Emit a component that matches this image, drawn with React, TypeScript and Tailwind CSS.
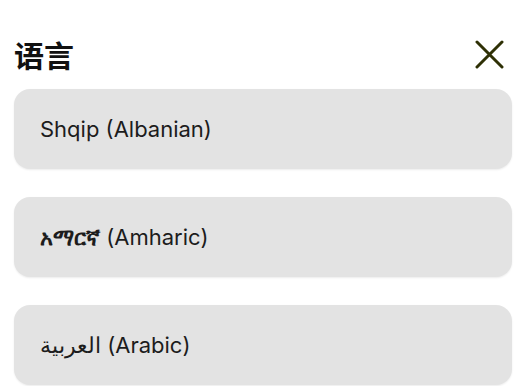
const languages = [
  { id: 'sq', native: 'Shqip', english: 'Albanian', bold: false },
  { id: 'am', native: 'አማርኛ', english: 'Amharic', bold: true },
  { id: 'ar', native: 'العربية', english: 'Arabic', bold: false },
];

export default function App() {
  return (
    <div className="w-[518px] h-[386px] overflow-hidden bg-white pl-[14px] pr-[6px] pt-[35px] font-['Inter','Noto_Sans','Noto_Sans_CJK_SC',sans-serif] text-[#1c1c1c]">
      <div className="flex items-center justify-between h-[38px] mb-[16px]">
        <h2 className="text-[30px] leading-none font-bold font-['Noto_Sans_CJK_SC',sans-serif] text-[#111]">语言</h2>
        <button className="mr-[8px] w-[29px] h-[29px] flex items-center justify-center">
          <svg width="29" height="29" viewBox="0 0 29 29" fill="none" stroke="#2e3005" strokeWidth="3" strokeLinecap="round">
            <path d="M2 2 L27 27 M27 2 L2 27" />
          </svg>
        </button>
      </div>
      <div className="flex flex-col gap-[28px]">
        {languages.map(lang => (
          <div
            key={lang.id}
            className="h-[80px] rounded-[16px] bg-[#e3e3e3] shadow-[0_1px_2px_rgba(0,0,0,0.08)] flex items-center px-[26px]"
          >
            <span className="text-[22px] leading-none">
              <span className={lang.bold ? 'font-bold' : ''}>{lang.native}</span> ({lang.english})
            </span>
          </div>
        ))}
      </div>
    </div>
  );
}
